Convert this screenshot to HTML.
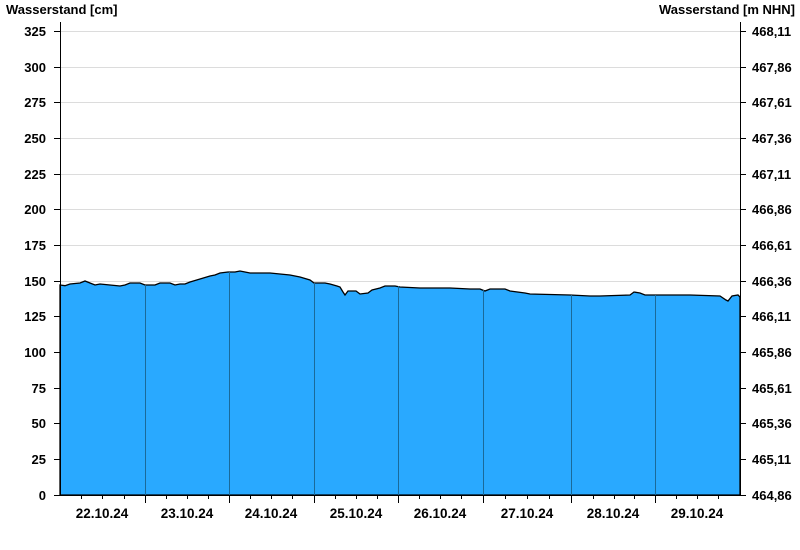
<!DOCTYPE html>
<html><head><meta charset="utf-8"><style>
html,body{margin:0;padding:0;background:#fff;}
svg{display:block;font-family:"Liberation Sans",Arial,sans-serif;font-weight:bold;font-size:13px;fill:#000;}
</style></head><body>
<svg width="800" height="550" viewBox="0 0 800 550">
<text x="6" y="14">Wasserstand [cm]</text>
<text x="795" y="14" text-anchor="end">Wasserstand [m NHN]</text>
<g stroke="#dcdcdc" stroke-width="1">
<line x1="60" x2="740" y1="31.5" y2="31.5"/><line x1="60" x2="740" y1="67.5" y2="67.5"/><line x1="60" x2="740" y1="102.5" y2="102.5"/><line x1="60" x2="740" y1="138.5" y2="138.5"/><line x1="60" x2="740" y1="174.5" y2="174.5"/><line x1="60" x2="740" y1="209.5" y2="209.5"/><line x1="60" x2="740" y1="245.5" y2="245.5"/><line x1="60" x2="740" y1="281.5" y2="281.5"/>
</g>
<path fill="#29a9ff" stroke="#000" stroke-width="1.3" d="M60,285 L65,285.7 L70,284 L80,283 L85,281 L90,283 L95,285 L100,284 L110,285 L120,286 L125,285 L130,283 L140,283 L145,285 L155,285 L160,283 L170,283 L175,285 L180,284 L185,284 L190,282 L200,279 L210,276 L215,275 L220,273 L228,272 L235,272 L240,271 L245,272 L250,273 L270,273 L290,275 L300,277 L310,280 L314,283 L325,283 L330,284 L337,286 L340,287 L343,292 L345,295 L348,291 L356,291 L360,294 L368,293 L372,290 L380,288 L385,286 L395,286 L400,287 L420,288 L450,288 L470,289 L480,289 L485,291 L490,289 L505,289 L510,291 L525,293 L530,294 L570,295 L590,296 L600,296 L630,295 L634,292 L640,293 L645,295 L660,295 L690,295 L720,296 L726,300 L728,301 L732,296 L738,295 L740,297 L740,495 L60,495 Z"/>
<g stroke="#1a6a9a" stroke-width="1">
<line x1="145.5" x2="145.5" y1="285" y2="495"/><line x1="229.5" x2="229.5" y1="272" y2="495"/><line x1="314.5" x2="314.5" y1="283" y2="495"/><line x1="398.5" x2="398.5" y1="286" y2="495"/><line x1="483.5" x2="483.5" y1="290" y2="495"/><line x1="571.5" x2="571.5" y1="295" y2="495"/><line x1="655.5" x2="655.5" y1="295" y2="495"/>
</g>
<g stroke="#000" stroke-width="1">
<line x1="60.5" x2="60.5" y1="22" y2="495"/><line x1="740.5" x2="740.5" y1="22" y2="495"/><line x1="60" x2="741" y1="495.5" y2="495.5"/>
<path d="M54,31.5h6M54,67.5h6M54,102.5h6M54,138.5h6M54,174.5h6M54,209.5h6M54,245.5h6M54,281.5h6M54,316.5h6M54,352.5h6M54,388.5h6M54,423.5h6M54,459.5h6M54,495.5h6"/>
<path d="M740,31.5h6M740,67.5h6M740,102.5h6M740,138.5h6M740,174.5h6M740,209.5h6M740,245.5h6M740,281.5h6M740,316.5h6M740,352.5h6M740,388.5h6M740,423.5h6M740,459.5h6M740,495.5h6"/>
<path d="M145.5,495v8M229.5,495v8M314.5,495v8M398.5,495v8M483.5,495v8M571.5,495v8M655.5,495v8"/>
<path d="M81.5,495v4M102.5,495v4M124.5,495v4M166.5,495v4M187.5,495v4M208.5,495v4M250.5,495v4M271.5,495v4M292.5,495v4M335.5,495v4M356.5,495v4M377.5,495v4M419.5,495v4M440.5,495v4M461.5,495v4M505.5,495v4M527.5,495v4M549.5,495v4M593.5,495v4M614.5,495v4M634.5,495v4M676.5,495v4M697.5,495v4M718.5,495v4"/>
</g>
<g text-anchor="end">
<text x="46" y="36">325</text><text x="46" y="72">300</text><text x="46" y="107">275</text><text x="46" y="143">250</text><text x="46" y="179">225</text><text x="46" y="214">200</text><text x="46" y="250">175</text><text x="46" y="286">150</text><text x="46" y="321">125</text><text x="46" y="357">100</text><text x="46" y="393">75</text><text x="46" y="428">50</text><text x="46" y="464">25</text><text x="46" y="500">0</text>
</g>
<g>
<text x="752" y="36">468,11</text><text x="752" y="72">467,86</text><text x="752" y="107">467,61</text><text x="752" y="143">467,36</text><text x="752" y="179">467,11</text><text x="752" y="214">466,86</text><text x="752" y="250">466,61</text><text x="752" y="286">466,36</text><text x="752" y="321">466,11</text><text x="752" y="357">465,86</text><text x="752" y="393">465,61</text><text x="752" y="428">465,36</text><text x="752" y="464">465,11</text><text x="752" y="500">464,86</text>
</g>
<g text-anchor="middle" style="font-size:13.5px">
<text x="102" y="518">22.10.24</text><text x="187" y="518">23.10.24</text><text x="271" y="518">24.10.24</text><text x="356" y="518">25.10.24</text><text x="440" y="518">26.10.24</text><text x="527" y="518">27.10.24</text><text x="613" y="518">28.10.24</text><text x="697" y="518">29.10.24</text>
</g>
</svg>
</body></html>
